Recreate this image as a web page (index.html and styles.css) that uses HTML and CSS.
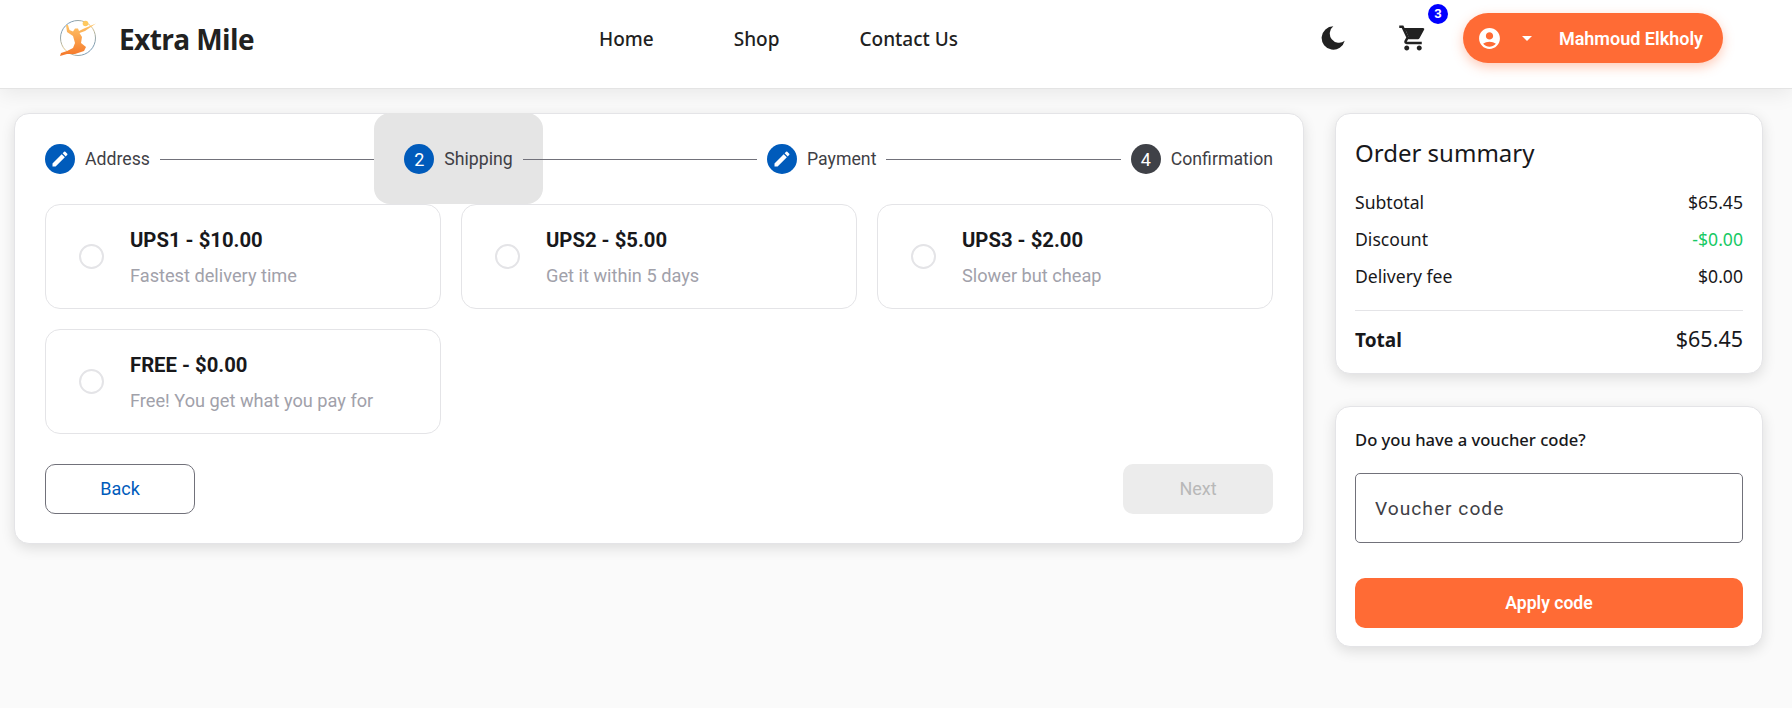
FILE: index.html

```html
<!DOCTYPE html>
<html lang="en">
<head>
  <meta charset="UTF-8" />
  <title>Extra Mile - Checkout</title>
  <meta name="viewport" content="width=device-width, initial-scale=1.0" />
  <link rel="stylesheet" href="styles.css">
</head>
<body>
  <header class="navbar">
    <a class="brand" href="#">
      <svg class="brand-logo" viewBox="0 0 40 40" width="40" height="40">
        <defs>
          <linearGradient id="ring" x1="0" y1="0" x2="1" y2="1">
            <stop offset="0" stop-color="#4a86c5" />
            <stop offset="0.5" stop-color="#e8c98a" />
            <stop offset="1" stop-color="#4a86c5" />
          </linearGradient>
          <linearGradient id="figure" x1="0" y1="0" x2="0" y2="1">
            <stop offset="0" stop-color="#ffc76a" />
            <stop offset="1" stop-color="#f5772a" />
          </linearGradient>
        </defs>
        <circle cx="19" cy="19" r="17.5" fill="none" stroke="url(#ring)" stroke-width="1" />
        <circle cx="26.5" cy="4.5" r="2.8" fill="#ffc95e" />
        <path fill="url(#figure)" d="M37 4.5 L26 12 L20.5 14 L23 18 L22 24 L27 28 L25 32 L16 35 L8 35 L1 37 L2 34 L8 32 L14 29 L16 24 L14 17 L8 13 L7 6 L9 6 L10.5 11 L14 12.5 L16 9.5 L19 9.5 L20 12 L25 9.5 Z" />
      </svg>
      <span class="brand-name">Extra Mile</span>
    </a>

    <nav class="nav-links">
      <a href="#">Home</a>
      <a href="#">Shop</a>
      <a href="#">Contact Us</a>
    </nav>

    <div class="nav-actions">
      <button class="icon-btn moon-btn" aria-label="Toggle theme">
        <svg viewBox="0 0 24 24" width="26" height="26"><path fill="#212121" d="M12.3 1.2a10.8 10.8 0 1 0 10.5 13.400 8.300 8.300 0 0 1-10.500-13.400z" /></svg>
      </button>
      <button class="icon-btn cart-btn" aria-label="Cart">
        <svg viewBox="0 0 24 24" width="30" height="30"><path fill="#212121" d="M15.55 13c.75 0 1.41-.41 1.75-1.03l3.58-6.49A.996.996 0 0 0 20.01 4H5.21l-.94-2H1v2h2l3.6 7.59-1.35 2.44C4.52 15.37 5.48 17 7 17h12v-2H7l1.1-2h7.45zM6.16 6h12.15l-2.76 5H8.53L6.16 6zM7 18c-1.1 0-1.99.9-1.99 2S5.9 22 7 22s2-.9 2-2-.9-2-2-2zm10 0c-1.1 0-1.99.9-1.99 2s.89 2 1.99 2 2-.9 2-2-.9-2-2-2z" /><path fill="#212121" d="M6 5.5h13.5l-3.4 6.2H8.7z" /></svg>
        <span class="cart-badge">3</span>
      </button>
      <button class="user-btn">
        <svg viewBox="0 0 24 24" width="25" height="25"><path fill="#fff" d="M12 2C6.48 2 2 6.48 2 12s4.48 10 10 10 10-4.48 10-10S17.52 2 12 2zm0 4c1.93 0 3.5 1.57 3.5 3.5S13.93 13 12 13s-3.500-1.57-3.500-3.500S10.070 6 12 6zm0 14c-2.030 0-4.430-.82-6.140-2.880C7.550 15.800 9.680 15 12 15s4.450.8 6.140 2.120C16.430 19.180 14.030 20 12 20z" /></svg>
        <span class="caret"></span>
        <span class="user-name">Mahmoud Elkholy</span>
      </button>
    </div>
  </header>

  <main class="checkout">
    <section class="card shipping-card">
      <div class="stepper">
        <div class="step">
          <span class="step-num">
            <svg viewBox="0 0 24 24" width="20" height="20"><path fill="#fff" d="M3 17.250V21h3.750L17.810 9.940l-3.750-3.750L3 17.250zM20.710 7.040a.996.996 0 0 0 0-1.410l-2.340-2.340a.996.996 0 0 0-1.410 0l-1.830 1.830 3.750 3.750 1.830-1.830z" /></svg>
          </span>
          <span class="step-label">Address</span>
        </div>
        <div class="step-line"></div>
        <div class="step step-active">
          <span class="step-num">2</span>
          <span class="step-label">Shipping</span>
        </div>
        <div class="step-line"></div>
        <div class="step">
          <span class="step-num">
            <svg viewBox="0 0 24 24" width="20" height="20"><path fill="#fff" d="M3 17.250V21h3.750L17.810 9.940l-3.750-3.750L3 17.250zM20.710 7.040a.996.996 0 0 0 0-1.410l-2.340-2.340a.996.996 0 0 0-1.410 0l-1.830 1.830 3.750 3.750 1.830-1.830z" /></svg>
          </span>
          <span class="step-label">Payment</span>
        </div>
        <div class="step-line"></div>
        <div class="step">
          <span class="step-num step-todo">4</span>
          <span class="step-label">Confirmation</span>
        </div>
      </div>

      <div class="options">
        <label class="option">
          <span class="radio"></span>
          <span class="option-text">
            <span class="option-title">UPS1 - $10.00</span>
            <span class="option-desc">Fastest delivery time</span>
          </span>
        </label>
        <label class="option">
          <span class="radio"></span>
          <span class="option-text">
            <span class="option-title">UPS2 - $5.00</span>
            <span class="option-desc">Get it within 5 days</span>
          </span>
        </label>
        <label class="option">
          <span class="radio"></span>
          <span class="option-text">
            <span class="option-title">UPS3 - $2.00</span>
            <span class="option-desc">Slower but cheap</span>
          </span>
        </label>
        <label class="option">
          <span class="radio"></span>
          <span class="option-text">
            <span class="option-title">FREE - $0.00</span>
            <span class="option-desc">Free! You get what you pay for</span>
          </span>
        </label>
      </div>

      <div class="form-actions">
        <button class="btn-back">Back</button>
        <button class="btn-next" disabled>Next</button>
      </div>
    </section>

    <aside class="sidebar">
      <section class="card summary-card">
        <h2>Order summary</h2>
        <div class="row"><span>Subtotal</span><span>$65.45</span></div>
        <div class="row"><span>Discount</span><span class="discount">-$0.00</span></div>
        <div class="row"><span>Delivery fee</span><span>$0.00</span></div>
        <hr>
        <div class="row total"><strong>Total</strong><span>$65.45</span></div>
      </section>

      <section class="card voucher-card">
        <h3>Do you have a voucher code?</h3>
        <input class="voucher-input" type="text" placeholder="Voucher code">
        <button class="btn-apply">Apply code</button>
      </section>
    </aside>
  </main>
</body>
</html>
```

FILE: styles.css

```css
* {
  box-sizing: border-box;
}

body {
  margin: 0;
  background: #fafafa;
  font-family: Roboto, sans-serif;
  color: #18181b;
}

a {
  color: inherit;
  text-decoration: none;
}

button {
  font-family: inherit;
  cursor: pointer;
}

.navbar {
  height: 89px;
  background: white;
  border-bottom: 1px solid #e4e4e4;
  box-shadow: 0 4px 20px rgba(0,0,0,0.08);
  display: flex;
  align-items: center;
  padding: 0 69px 12px 59px;
  position: relative;
}

.brand {
  display: flex;
  align-items: center;
  gap: 20px;
  width: 540px;
}

.brand-logo {
  display: block;
  margin-top: 1px;
}

.brand-name {
  margin-top: 2px;
  font-family: "Open Sans", sans-serif;
  font-size: 28px;
  font-weight: 700;
  color: #212121;
  letter-spacing: -0.6px;
}

.nav-links {
  display: flex;
  gap: 80px;
  margin-top: 2px;
  font-family: "Noto Sans", sans-serif;
  font-size: 19px;
  font-weight: 500;
  color: #212121;
}

.nav-actions {
  margin-left: auto;
  display: flex;
  align-items: center;
}

.icon-btn {
  background: none;
  border: none;
  padding: 0;
  display: flex;
  position: relative;
}

.moon-btn {
  margin-right: 52px;
}

.cart-btn {
  margin-right: 35px;
}

.cart-badge {
  position: absolute;
  top: -19px;
  right: -20px;
  width: 20px;
  height: 20px;
  border-radius: 50%;
  background: #0000ff;
  color: white;
  font-size: 13px;
  font-weight: 700;
  line-height: 20px;
  text-align: center;
}

.user-btn {
  width: 260px;
  height: 50px;
  border: none;
  border-radius: 25px;
  background: #ff6b35;
  box-shadow: 0 4px 12px rgba(255,107,53,0.35);
  color: white;
  display: flex;
  align-items: center;
  padding: 0 20px 0 14px;
}

.caret {
  width: 0;
  height: 0;
  margin-left: 20px;
  border-left: 5px solid transparent;
  border-right: 5px solid transparent;
  border-top: 5px solid white;
}

.user-name {
  margin-left: auto;
  font-size: 18px;
  font-weight: 600;
}

.checkout {
  display: flex;
  gap: 31px;
  align-items: flex-start;
  min-height: 619px;
  padding: 24px 29px 30px 14px;
}

.card {
  background: white;
  border: 1px solid #e4e4e7;
  border-radius: 15px;
  box-shadow: 0 4px 14px rgba(0,0,0,0.12);
}

.shipping-card {
  width: 1290px;
  padding: 30px 30px 29px;
}

.stepper {
  display: flex;
  align-items: center;
  height: 30px;
}

.step {
  display: flex;
  align-items: center;
  gap: 10px;
  position: relative;
}

.step-active::before {
  content: "";
  position: absolute;
  inset: -31px -30px -30px -30px;
  background: #e5e5e5;
  border-radius: 16px;
}

.step-num {
  width: 30px;
  height: 30px;
  border-radius: 50%;
  background: #005bbb;
  color: white;
  font-size: 18px;
  display: flex;
  align-items: center;
  justify-content: center;
  position: relative;
}

.step-todo {
  background: #3f4147;
}

.step-label {
  font-size: 17.7px;
  color: #3f3f46;
  position: relative;
}

.step-line {
  flex: 1;
  height: 1px;
  margin: 1px 10px 0;
  background: #71717a;
  position: relative;
}

.options {
  display: grid;
  grid-template-columns: repeat(3, 1fr);
  gap: 20px;
  margin-top: 30px;
  position: relative;
}

.option {
  height: 105px;
  border: 1px solid #e4e4e7;
  border-radius: 15px;
  display: flex;
  align-items: center;
  padding: 0 33px;
  gap: 26px;
}

.radio {
  width: 25px;
  height: 25px;
  flex: none;
  border: 2px solid #e4e4e7;
  border-radius: 50%;
}

.option-text {
  display: flex;
  flex-direction: column;
  gap: 13px;
}

.option-title {
  font-size: 20.3px;
  font-weight: 700;
  color: #18181b;
}

.option-desc {
  font-size: 18.2px;
  color: #a1a1aa;
}

.form-actions {
  display: flex;
  justify-content: space-between;
  margin-top: 30px;
}

.form-actions button {
  width: 150px;
  height: 50px;
  padding: 0 0 2px;
  border-radius: 10px;
  font-size: 18px;
  font-weight: 400;
}

.btn-back {
  background: white;
  border: 1px solid #71717a;
  color: #005bbb;
}

.btn-next {
  background: #ececec;
  border: none;
  color: #b8b8b8;
}

.sidebar {
  width: 428px;
  display: flex;
  flex-direction: column;
  gap: 32px;
}

.summary-card,
.voucher-card {
  padding: 20px 19px;
  font-family: "Noto Sans", sans-serif;
}

.summary-card {
  height: 261px;
}

.summary-card h2 {
  margin: 0 0 12px;
  font-size: 24px;
  font-weight: 400;
  line-height: 38px;
}

.row {
  display: flex;
  justify-content: space-between;
  align-items: baseline;
  font-size: 17.6px;
  line-height: 37px;
  color: #18181b;
}

.discount {
  color: #17c964;
}

.summary-card hr {
  border: none;
  border-top: 1px solid #e4e4e7;
  margin: 15px 0 9px;
}

.total {
  font-size: 21.5px;
}

.total strong {
  font-size: 19px;
  font-weight: 700;
}

.voucher-card {
  height: 241px;
}

.voucher-card h3 {
  margin: 0 0 20px;
  font-size: 16.6px;
  font-weight: 500;
  line-height: 26px;
}

.voucher-input {
  display: block;
  width: 100%;
  height: 70px;
  border: 1px solid #71717a;
  border-radius: 5px;
  padding: 0 19px;
  font-family: Roboto, sans-serif;
  font-size: 19.2px;
  letter-spacing: 1px;
  background: white;
}

.voucher-input::placeholder {
  color: #3f3f46;
  opacity: 1;
}

.btn-apply {
  display: block;
  width: 100%;
  height: 50px;
  margin-top: 35px;
  border: none;
  border-radius: 10px;
  background: #ff6b35;
  color: white;
  font-family: Roboto, sans-serif;
  font-size: 17.6px;
  font-weight: 600;
}
```
